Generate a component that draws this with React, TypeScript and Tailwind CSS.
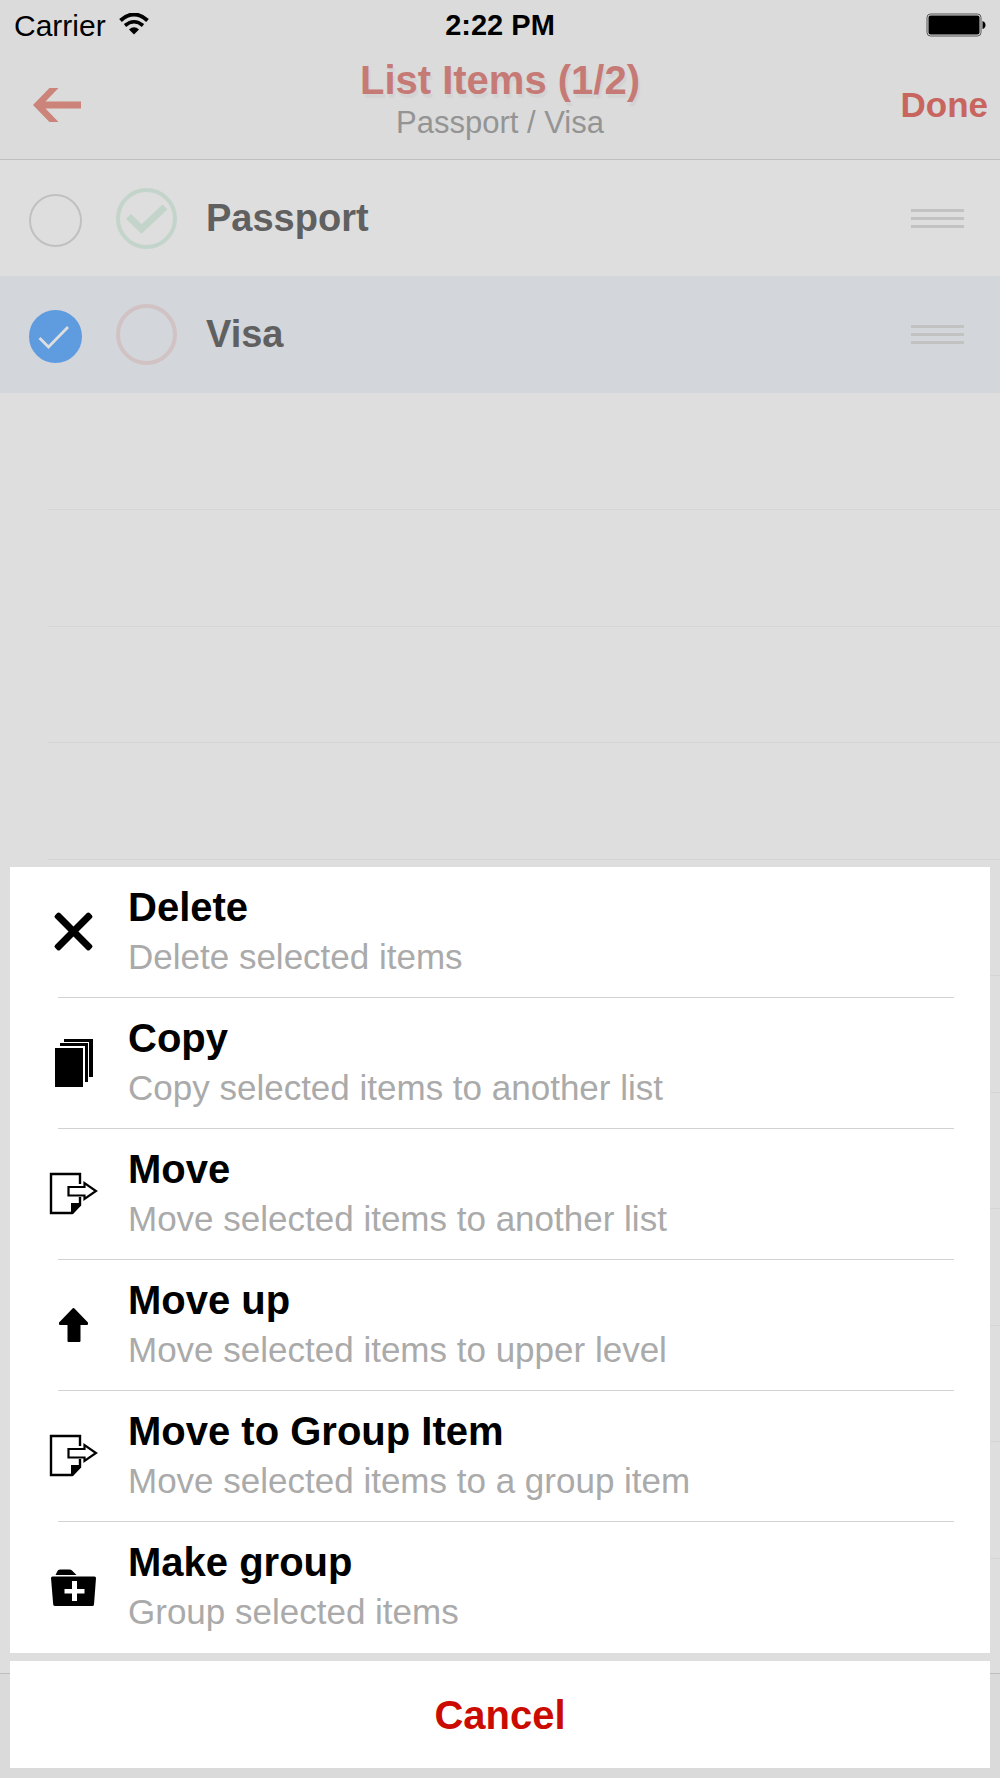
import type { ReactNode } from "react";

type Item = { name: string; selected: boolean; done: boolean };

const items: Item[] = [
  { name: "Passport", selected: false, done: true },
  { name: "Visa", selected: true, done: false },
];

function DeleteIcon() {
  return (
    <svg viewBox="0 0 48 48" className="size-12" aria-hidden="true">
      <rect x="0" y="20" width="49" height="7" rx="2" transform="rotate(45 24.5 23.5)" />
      <rect x="0" y="20" width="49" height="7" rx="2" transform="rotate(-45 24.5 23.5)" />
    </svg>
  );
}

function CopyIcon() {
  return (
    <svg viewBox="0 0 48 48" className="size-12" aria-hidden="true">
      <path d="M6 9H34V48H6ZM11 4H39V43H36V7H11ZM15 0H44V38H40V3H15Z" />
    </svg>
  );
}

function MoveIcon() {
  return (
    <svg viewBox="0 0 48 48" className="size-12 overflow-visible" fill="none" aria-hidden="true">
      <path d="M31 14V4H2V43H23L31 35V27" stroke="#000" strokeWidth="2.400" />
      <path d="M22 33H32V35L24 44H22Z" fill="#000" />
      <path d="M19.500 17H35.500V13L47 21L35.500 29V25.500H19.500Z" stroke="#000" strokeWidth="2.200" />
    </svg>
  );
}

function MoveUpIcon() {
  return (
    <svg viewBox="0 0 48 48" className="size-12" aria-hidden="true">
      <path
        d="M24.500 8L38 22V23H30.500V40H19.500V23H11V22Z"
        stroke="#000"
        strokeWidth="2"
        strokeLinejoin="round"
      />
    </svg>
  );
}

function GroupIcon() {
  return (
    <svg viewBox="0 0 48 48" className="size-12" aria-hidden="true">
      <path d="M6.500 12L8.500 8Q9 6.500 11 6.500H20.500Q22 6.500 23 7.500L27.500 12Z" />
      <path
        fillRule="evenodd"
        d="M3.500 13.500H45.500Q47 13.500 47 15L45 41.500Q45 43 43 43H6Q4.500 43 4.200 41.500L2 15Q2 13.500 3.500 13.500ZM23 18V26H15.500V30.500H23V38H28V30.500H35.500V26H28V18Z"
      />
    </svg>
  );
}

const actions: { title: string; detail: string; icon: ReactNode }[] = [
  { title: "Delete", detail: "Delete selected items", icon: <DeleteIcon /> },
  { title: "Copy", detail: "Copy selected items to another list", icon: <CopyIcon /> },
  { title: "Move", detail: "Move selected items to another list", icon: <MoveIcon /> },
  { title: "Move up", detail: "Move selected items to upper level", icon: <MoveUpIcon /> },
  { title: "Move to Group Item", detail: "Move selected items to a group item", icon: <MoveIcon /> },
  { title: "Make group", detail: "Group selected items", icon: <GroupIcon /> },
];

function StatusBar() {
  return (
    <div className="grid h-[51px] grid-cols-[1fr_auto_1fr] items-center px-[14px] text-[30px] leading-[51px] text-black">
      <div className="flex items-center gap-[13px]">
        <span>Carrier</span>
        <svg viewBox="0 0 30 22" className="mb-1 h-[22px] w-[30px]" fill="none" aria-label="Wi-Fi">
          <path d="M1.500 7.500Q15-4.500 28.500 7.500" stroke="#000" strokeWidth="4" />
          <path d="M6 12.500Q15 5 24 12.500" stroke="#000" strokeWidth="3.600" />
          <path d="M10 16.500Q15 12 20 16.500L15 21.500Z" fill="#000" />
        </svg>
      </div>
      <span className="text-[29px] font-bold">2:22 PM</span>
      <svg viewBox="0 0 60 24" className="mb-0.5 h-6 w-[60px] justify-self-end" aria-label="Battery full">
        <rect x="1" y="1" width="54" height="22" rx="3.500" fill="none" stroke="#555" strokeWidth="1" />
        <rect x="2.500" y="2.500" width="51" height="19" rx="2" />
        <path d="M56.500 8Q59.500 9 59.500 12T56.500 16Z" />
      </svg>
    </div>
  );
}

function Header() {
  return (
    <header className="h-[160px] shrink-0 border-b border-[#bfbfbf] bg-[#dbdbdb]">
      <StatusBar />
      <div className="grid h-[108px] grid-cols-[1fr_auto_1fr] items-center px-3">
        <button type="button" aria-label="Back" className="ml-[21px] justify-self-start">
          <svg viewBox="0 0 48 34" className="h-[34px] w-12" aria-hidden="true">
            <path d="M0 17L16.500 0H25.500L12.500 13.500H48V20.500H12.500L25.500 34H16.500Z" fill="#cb837a" />
          </svg>
        </button>
        <div className="self-start pt-[7px] text-center">
          <h1 className="text-[40px] leading-[44px] font-bold text-[#c67a75] [text-shadow:2px_4px_1px_#d3d3d3]">
            List Items (1/2)
          </h1>
          <p className="text-[31px] leading-[42px] text-[#949494]">Passport / Visa</p>
        </div>
        <button type="button" className="justify-self-end text-[35px] font-bold text-[#c8655f]">
          Done
        </button>
      </div>
    </header>
  );
}

function ItemRow({ item }: { item: Item }) {
  return (
    <li
      className={`flex items-center pr-9 pl-[29px] odd:h-[116px] even:h-[117px] ${
        item.selected ? "bg-[#d3d6db]" : ""
      }`}
    >
      <span className="grid shrink-0 pt-1">
        <input
          type="checkbox"
          defaultChecked={item.selected}
          aria-label={`Select ${item.name}`}
          className="size-[53px] appearance-none rounded-full border-2 border-[#c0c0c0] [grid-area:1/1] checked:border-[#5e9bdf] checked:bg-[#5e9bdf]"
        />
        {item.selected && (
          <svg viewBox="0 0 53 53" className="pointer-events-none size-[53px] [grid-area:1/1]" fill="none" aria-hidden="true">
            <path d="M10.500 28L19.500 37L39 17" stroke="#dedede" strokeWidth="2.800" />
          </svg>
        )}
      </span>
      <span className="ml-[34px] grid shrink-0">
        <input
          type="checkbox"
          defaultChecked={item.done}
          aria-label={`${item.name} packed`}
          className="size-[61px] appearance-none rounded-full border-4 border-[#d1c2c3] [grid-area:1/1] checked:border-[#c3d4cb]"
        />
        {item.done && (
          <svg viewBox="0 0 61 61" className="pointer-events-none size-[61px] [grid-area:1/1]" fill="none" aria-hidden="true">
            <path d="M12.500 28.500L25.500 41L49 19" stroke="#c3d4cb" strokeWidth="7" />
          </svg>
        )}
      </span>
      <span className="ml-[29px] flex-1 text-[38px] font-bold text-[#606060]">{item.name}</span>
      <button type="button" aria-label={`Reorder ${item.name}`} className="flex w-[53px] flex-col gap-[5px]">
        <span className="h-[3px] bg-[#c2c2c2]" />
        <span className="h-[3px] bg-[#c2c2c2]" />
        <span className="h-[3px] bg-[#c2c2c2]" />
      </button>
    </li>
  );
}

function ActionSheet() {
  return (
    <div role="dialog" aria-label="Item actions" className="absolute inset-x-0 bottom-0 flex flex-col gap-2 p-[10px]">
      <ul className="bg-white">
        {actions.map((action) => (
          <li key={action.title} className="group">
            <button type="button" className="flex h-[130px] w-full items-center gap-[31px] pl-[39px] text-left">
              <span className="shrink-0">{action.icon}</span>
              <span className="flex flex-col">
                <span className="text-[40px] leading-[48px] font-bold text-black">{action.title}</span>
                <span className="h-[50px] text-[35px] leading-[52px] text-[#aaaaaa]">{action.detail}</span>
              </span>
            </button>
            <div className="mr-9 ml-12 h-px bg-[#d2d2d4] group-last:bg-white" />
          </li>
        ))}
      </ul>
      <button type="button" className="h-[107px] bg-white text-[40px] font-bold text-[#cc0b00]">
        Cancel
      </button>
    </div>
  );
}

export default function App() {
  return (
    <div className="relative flex h-screen min-h-[1100px] flex-col overflow-hidden bg-[#dedede] font-['Liberation_Sans',Arial,sans-serif]">
      <Header />
      <main className="min-h-0 flex-1 overflow-hidden">
        <ul>
          {items.map((item) => (
            <ItemRow key={item.name} item={item} />
          ))}
        </ul>
        <div aria-hidden="true" className="pl-12">
          {Array.from({ length: 11 }, (_, i) => (
            <div key={i} className="border-t border-[#d5d5d5] first:border-transparent odd:h-[116px] even:h-[117px]" />
          ))}
        </div>
      </main>
      <footer className="h-[105px] shrink-0 border-t border-[#bfbfbf] bg-[#dadada]" />
      <ActionSheet />
    </div>
  );
}
